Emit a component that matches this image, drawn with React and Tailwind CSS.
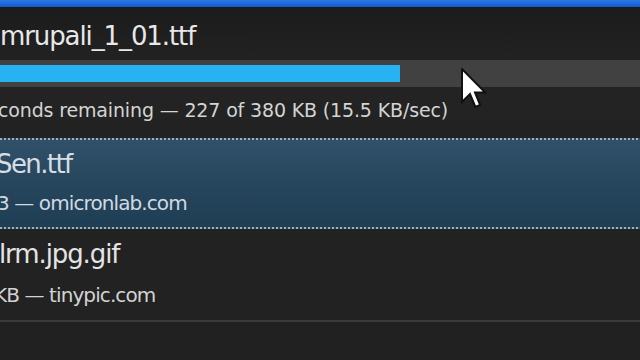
import React from 'react';

const Cursor = () => (
  <svg
    className="absolute left-[461px] top-[68px]"
    width="26"
    height="44"
    viewBox="0 0 13 22"
  >
    <path
      d="M0.5 0.5 L0.5 17 L4.5 13 L7.2 19.5 L9.6 18.5 L7 12.2 L12 12.2 Z"
      fill="#ffffff"
      stroke="#111111"
      strokeWidth="1"
      strokeLinejoin="miter"
    />
  </svg>
);

const Dotted = () => (
  <div className="h-[2px] bg-[repeating-linear-gradient(90deg,#9fb0bd_0px,#9fb0bd_2px,#34495a_2px,#34495a_4px)]" />
);

const DownloadsPage = () => {
  return (
    <div className="relative w-[640px] h-[360px] overflow-hidden bg-[#212121] font-['DejaVu_Sans',sans-serif]">
      {/* window title strip */}
      <div className="h-[7px] bg-gradient-to-b from-[#2a7ae6] to-[#1259c9]" />

      {/* downloading item */}
      <div className="h-[131px] bg-gradient-to-b from-[#1b1b1b] via-[#242424] to-[#222222] pt-[14px]">
        <div className="h-[30px] leading-[30px] text-[26px] tracking-[-1.1px] text-[#e8e8e8] whitespace-nowrap">
          mrupali_1_01.ttf
        </div>
        <div className="mt-[9px] h-[27px] bg-[#414141] py-[5px]">
          <div className="h-full w-[400px] bg-[#27b3f2]" />
        </div>
        <div className="mt-[11px] h-[24px] leading-[24px] text-[19px] tracking-[-0.15px] text-[#d4d4d4] whitespace-nowrap -ml-[2px]">
          conds remaining — 227 of 380 KB (15.5 KB/sec)
        </div>
      </div>

      <Dotted />

      {/* selected item */}
      <div className="h-[87px] bg-gradient-to-b from-[#31506a] via-[#26465d] to-[#1f3e54] pt-[9px]">
        <div className="h-[30px] leading-[30px] text-[26px] tracking-[-1.6px] text-[#d6dee4] whitespace-nowrap -ml-[4px]">
          Sen.ttf
        </div>
        <div className="mt-[12px] h-[24px] leading-[24px] text-[20px] tracking-[-0.9px] text-[#d0dae1] whitespace-nowrap -ml-[3px]">
          3 — omicronlab.com
        </div>
      </div>

      <Dotted />

      {/* finished item */}
      <div className="h-[91px] bg-[#222222] pt-[10px]">
        <div className="h-[30px] leading-[30px] text-[26px] tracking-[-1.1px] text-[#e4e4e4] whitespace-nowrap -ml-[1px]">
          lrm.jpg.gif
        </div>
        <div className="mt-[14px] h-[24px] leading-[24px] text-[20px] tracking-[-0.9px] text-[#d2d2d2] whitespace-nowrap -ml-[6px]">
          KB — tinypic.com
        </div>
      </div>

      <div className="h-[2px] bg-[#3a3a3a]" />

      <Cursor />
    </div>
  );
};

export default DownloadsPage;
